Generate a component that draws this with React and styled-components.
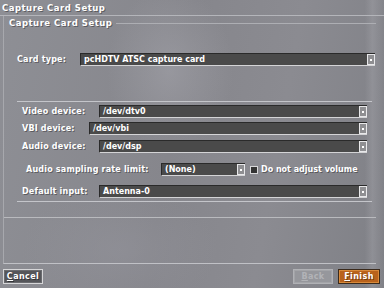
import React from 'react';
import styled, { createGlobalStyle } from 'styled-components';

const Global = createGlobalStyle`
  body {
    margin: 0;
    font-family: "DejaVu Sans", "Liberation Sans", sans-serif;
  }
`;

const Screen = styled.div`
  width: 384px;
  height: 288px;
  display: flex;
  flex-direction: column;
  overflow: hidden;
  color: #fff;
  font-weight: bold;
  font-size: 8px;
  text-shadow: 1px 1px 0 rgba(0, 0, 0, 0.35);
  background:
    radial-gradient(ellipse 90px 120px at 170px 70px, rgba(165,165,172,0.55), rgba(165,165,172,0) 70%),
    radial-gradient(ellipse 140px 90px at 120px 250px, rgba(150,150,158,0.45), rgba(150,150,158,0) 70%),
    linear-gradient(90deg, rgba(0,0,0,0) 0%, rgba(0,0,0,0) 95%, rgba(170,170,176,0.35) 97%, rgba(0,0,0,0) 100%),
    linear-gradient(100deg, #8e8f95 0%, #86868c 45%, #8b8b91 70%, #7f8086 100%);
`;

const TitleBar = styled.div`
  height: 15px;
  padding-left: 2px;
  display: flex;
  align-items: center;
  font-size: 8.5px;
  letter-spacing: 0.5px;
  border-bottom: 1px solid #b4b5ba;
`;

const Group = styled.div`
  flex: 1;
  margin: 0 8px 0 3px;
  display: flex;
  flex-direction: column;
  border-left: 1px solid #a7a8ad;
  border-bottom: 1px solid #c0c1c6;
`;

const GroupHead = styled.div`
  height: 14px;
  display: flex;
  align-items: center;
  padding-left: 5px;
  font-size: 8.5px;
  letter-spacing: 0.5px;
`;

const HeadLine = styled.div`
  flex: 1;
  height: 1px;
  margin-left: 4px;
  background: #adaeb3;
`;

const Row = styled.div`
  display: flex;
  align-items: center;
  height: 13px;
  margin-top: ${p => p.$top || 0}px;
  padding-left: ${p => p.$left || 0}px;
  padding-right: ${p => p.$right || 0}px;
`;

const Label = styled.div`
  width: ${p => p.$w}px;
  flex: none;
  white-space: nowrap;
  letter-spacing: 0.2px;
`;

const Combo = styled.div`
  flex: ${p => (p.$w ? 'none' : 1)};
  width: ${p => (p.$w ? `${p.$w}px` : 'auto')};
  height: 13px;
  box-sizing: border-box;
  display: flex;
  align-items: center;
  background: #4a4a4a;
  border-top: 1px solid #2a2a2a;
  border-left: 1px solid #2a2a2a;
  border-bottom: 1px solid #d4d4d6;
  padding-left: 3px;
  font-size: 8px;
  text-shadow: none;
`;

const ComboText = styled.span`
  flex: 1;
  white-space: nowrap;
`;

const ComboBtn = styled.div`
  width: 8px;
  height: 11px;
  box-sizing: border-box;
  border: 1px solid #e8e8ea;
  background: #8f8f92;
  display: flex;
  align-items: center;
  justify-content: center;
  &::after {
    content: '';
    width: 2px;
    height: 2px;
    background: #fff;
  }
`;

const Inner = styled.div`
  margin: 35px 4px 0 13px;
  padding: 3px 5px 3px 5px;
  border-top: 1px solid #c4c5ca;
  border-bottom: 1px solid #c4c5ca;
  display: flex;
  flex-direction: column;
`;

const Check = styled.div`
  width: 8px;
  height: 8px;
  box-sizing: border-box;
  margin: 0 3px 0 5px;
  border: 1px solid #d8d8da;
  background: #333;
`;

const Separator = styled.div`
  height: 1px;
  margin-top: 15px;
  background: #b9babe;
`;

const Footer = styled.div`
  height: 24px;
  display: flex;
  align-items: center;
  padding: 0 4px 0 3px;
  gap: 5px;
`;

const Button = styled.div`
  width: ${p => p.$w}px;
  height: 15px;
  box-sizing: border-box;
  display: flex;
  align-items: center;
  justify-content: center;
  letter-spacing: 0.4px;
  border: 1px solid ${p => (p.$kind === 'primary' ? '#3a2a1c' : p.$kind === 'off' ? '#b0b1b5' : '#d6d6d8')};
  background: ${p => (p.$kind === 'primary' ? '#b9621b' : p.$kind === 'off' ? '#96979c' : '#55565a')};
  color: ${p => (p.$kind === 'off' ? '#b2b3b7' : '#fff')};
  text-shadow: ${p => (p.$kind === 'off' ? 'none' : '1px 1px 0 rgba(0,0,0,0.4)')};
  box-shadow: inset 0 0 0 1px ${p => (p.$kind === 'primary' ? '#d98a3a' : p.$kind === 'off' ? '#a3a4a8' : '#6a6b6f')};
  u { text-decoration: underline; }
`;

const Spacer = styled.div`
  flex: 1;
`;

const Select = ({ value, w }) => (
  <Combo $w={w}>
    <ComboText>{value}</ComboText>
    <ComboBtn />
  </Combo>
);

export default function App() {
  return (
    <Screen>
      <Global />
      <TitleBar>Capture Card Setup</TitleBar>
      <Group>
        <GroupHead>
          Capture Card Setup
          <HeadLine />
        </GroupHead>
        <Row $top={23} $left={13} $right={1}>
          <Label $w={63}>Card type:</Label>
          <Select value="pcHDTV ATSC capture card" />
        </Row>
        <Inner>
          <Row>
            <Label $w={77}>Video device:</Label>
            <Select value="/dev/dtv0" />
          </Row>
          <Row $top={4}>
            <Label $w={67}>VBI device:</Label>
            <Select value="/dev/vbi" />
          </Row>
          <Row $top={5}>
            <Label $w={77}>Audio device:</Label>
            <Select value="/dev/dsp" />
          </Row>
          <Row $top={10} $left={4}>
            <Label $w={135}>Audio sampling rate limit:</Label>
            <Select value="(None)" w={84} />
            <Check />
            <span>Do not adjust volume</span>
          </Row>
          <Row $top={9}>
            <Label $w={77}>Default input:</Label>
            <Select value="Antenna-0" />
          </Row>
        </Inner>
        <Separator />
      </Group>
      <Footer>
        <Button $w={40}><span><u>C</u>ancel</span></Button>
        <Spacer />
        <Button $w={40} $kind="off"><span><u>B</u>ack</span></Button>
        <Button $w={42} $kind="primary"><span><u>F</u>inish</span></Button>
      </Footer>
    </Screen>
  );
}
